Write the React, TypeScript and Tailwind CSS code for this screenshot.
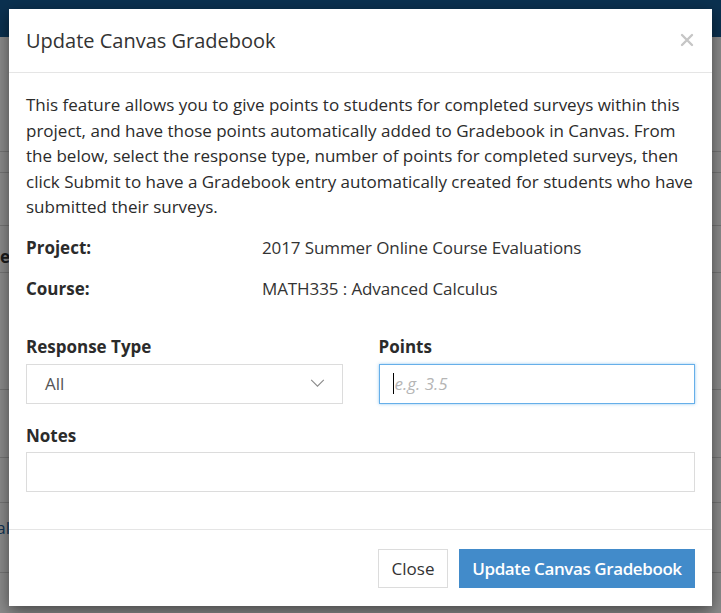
const font = { fontFamily: '"Open Sans", "Noto Sans", sans-serif' }

function BgRow({ h, text, bold, pad }: { h: string; text?: string; bold?: boolean; pad?: string }) {
  return (
    <div className={`${h} ${pad ?? ''} border-b border-[#d6d6d6] flex items-start`}>
      <div className="w-[10px] overflow-hidden flex justify-end">
        {text && (
          <span className={`shrink-0 text-[17px] leading-[25.5px] ${bold ? 'font-bold text-[#333]' : 'text-[#1f5f99]'}`}>
            {text}
          </span>
        )}
      </div>
    </div>
  )
}

export default function App() {
  return (
    <div className="relative h-[613px] w-[721px] overflow-hidden bg-white" style={font}>
      {/* page behind the dialog */}
      <div className="flex flex-col">
        <div className="h-[37px] bg-[#145a92]" />
        <BgRow h="h-[115px]" />
        <BgRow h="h-[21px]" />
        <BgRow h="h-[53px]" />
        <BgRow h="h-[47px]" pad="pt-[18px]" text="Title" bold />
        <BgRow h="h-[117px]" />
        <BgRow h="h-[68px]" />
        <BgRow h="h-[45px]" />
        <BgRow h="h-[70px]" pad="pt-[12px]" text="Final" />
      </div>

      {/* backdrop */}
      <div className="absolute inset-0 bg-black/45" />

      {/* dialog */}
      <div className="absolute inset-0 p-[9px]">
        <div className="w-[703px] bg-white shadow-[0_5px_15px_rgba(0,0,0,0.5)] text-[#333]">
          <div className="h-[64px] px-[17px] flex items-center justify-between border-b border-[#e5e5e5]">
            <h4 className="text-[20px] text-[#333] pt-[1px]">Update Canvas Gradebook</h4>
            <button className="w-[14px] h-[14px] mr-[1px] mt-[-2px]" aria-label="Close">
              <svg viewBox="0 0 14 14" className="w-[14px] h-[14px]">
                <path d="M2 2 L12 12 M12 2 L2 12" stroke="#c6c6c6" strokeWidth="2.4" strokeLinecap="round" />
              </svg>
            </button>
          </div>

          <div className="px-[17px] pt-[19px] pb-[37px]">
            <p className="text-[17px] leading-[25.5px] text-[#2b2b2b]">
              This feature allows you to give points to students for completed surveys within this project, and have
              those points automatically added to Gradebook in Canvas. From the below, select the response type,
              number of points for completed surveys, then click Submit to have a Gradebook entry automatically
              created for students who have submitted their surveys.
            </p>

            <div className="mt-[15px] flex flex-col gap-[15.5px] text-[17px] leading-[25.5px]">
              <div className="flex">
                <div className="w-[236px] font-bold text-[#2b2b2b]">Project:</div>
                <div className="text-[#333] tracking-[-0.1px]">2017 Summer Online Course Evaluations</div>
              </div>
              <div className="flex">
                <div className="w-[236px] font-bold text-[#2b2b2b]">Course:</div>
                <div className="text-[#333] tracking-[-0.1px]">MATH335 : Advanced Calculus</div>
              </div>
            </div>

            <div className="mt-[33px] grid grid-cols-2 gap-x-[36px]">
              <div>
                <label className="block text-[17px] leading-[25.5px] font-bold text-[#2b2b2b] mb-[4px]">Response Type</label>
                <div className="h-[40px] border border-[#dcdcdc] flex items-center justify-between pl-[18px] pr-[17px]">
                  <span className="text-[17px] text-[#555]">All</span>
                  <svg viewBox="0 0 16 10" className="w-[15px] h-[9px]">
                    <path d="M1 1 L8 8 L15 1" fill="none" stroke="#8a8a8a" strokeWidth="1.2" />
                  </svg>
                </div>
              </div>
              <div>
                <label className="block text-[17px] leading-[25.5px] font-bold text-[#2b2b2b] mb-[4px]">Points</label>
                <div className="relative">
                  <input
                    placeholder="e.g. 3.5"
                    className="w-full h-[40px] border border-[#66afe9] shadow-[0_0_3px_rgba(102,175,233,0.7)] pl-[15px] text-[17px] italic outline-none placeholder:text-[#b5b5b5]"
                  />
                  <span className="absolute left-[14px] top-[9px] w-[1px] h-[21px] bg-black pointer-events-none" />
                </div>
              </div>
            </div>

            <label className="mt-[19px] block text-[17px] leading-[25.5px] font-bold text-[#2b2b2b] mb-[4px]">Notes</label>
            <input className="w-full h-[40px] border border-[#dcdcdc] px-[15px] text-[17px] outline-none" />
          </div>

          <div className="border-t border-[#e5e5e5] px-[17px] pt-[19px] pb-[18px] flex justify-end gap-[11px]">
            <button className="h-[39px] w-[70px] border border-[#dcdcdc] bg-white text-[17px] text-[#333]">Close</button>
            <button className="h-[39px] w-[236px] bg-[#428bca] text-[17px] font-semibold text-white tracking-[-0.4px]">
              Update Canvas Gradebook
            </button>
          </div>
        </div>
      </div>
    </div>
  )
}
